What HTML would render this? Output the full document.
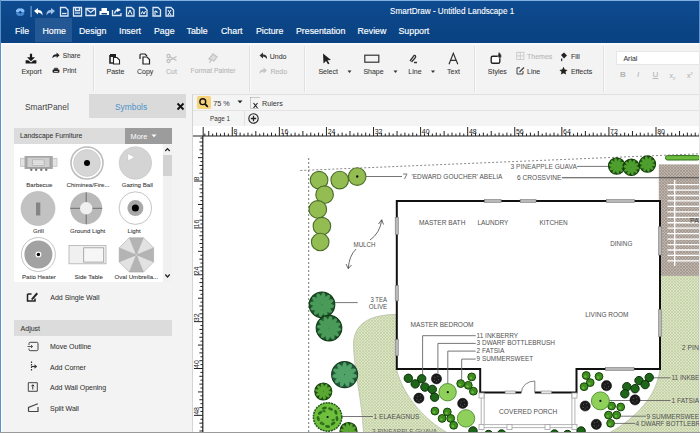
<!DOCTYPE html>
<html><head><meta charset="utf-8">
<style>
*{margin:0;padding:0;box-sizing:border-box}
html,body{width:700px;height:433px;overflow:hidden;background:#f3f3f3;font-family:"Liberation Sans",sans-serif}
.a{position:absolute;white-space:nowrap}
.t{position:absolute;white-space:nowrap;line-height:1}
#title{left:0;top:0;width:700px;height:43px;background:linear-gradient(#0e4b90,#0b4586 60%,#0a4283)}
.menu{color:#fff;font-size:8.8px;top:27px;-webkit-text-stroke:0.15px #fff}
.rb{color:#383838;font-size:7px;-webkit-text-stroke:0.07px #383838}
.dim{-webkit-text-stroke:0.1px #bbb}
.dim{color:#b5b5b5}
.sep{position:absolute;width:1px;background:#e0e0e0;box-shadow:1px 0 0 #fafafa}
.sym{color:#3a3a3a;font-size:6.1px;-webkit-text-stroke:0.08px #3a3a3a}
.pl{color:#333;font-size:7px;-webkit-text-stroke:0.06px #333}
</style></head><body>
<!-- outer border -->
<div class="a" style="left:0;top:0;width:700px;height:1px;background:#7fb0e0;z-index:5"></div>
<div class="a" style="left:0;top:0;width:1px;height:433px;background:#5b8fc7;z-index:5"></div>
<div class="a" style="left:1px;top:43px;width:1px;height:390px;background:#fff;z-index:5"></div>
<div class="a" style="left:699px;top:43px;width:1px;height:390px;background:#e8e8e8;z-index:5"></div>
<div class="a" style="left:699px;top:0;width:1px;height:43px;background:#5f94cc;z-index:5"></div>
<div class="a" style="left:1px;top:43px;width:698px;height:2px;background:#fafafa;z-index:4"></div>
<div class="a" style="left:0;top:432px;width:700px;height:1px;background:#9a9a9a;z-index:5"></div>

<!-- title bar -->
<div id="title" class="a"></div>
<div class="a" style="left:35px;top:18px;width:37px;height:24px;background:#235894"></div>
<div class="t" style="left:390px;top:7.6px;color:#fff;font-size:8.15px;-webkit-text-stroke:0.1px #fff">SmartDraw - Untitled Landscape 1</div>
<div class="t menu" style="left:15px">File</div>
<div class="t menu" style="left:42.5px">Home</div>
<div class="t menu" style="left:79px">Design</div>
<div class="t menu" style="left:119px">Insert</div>
<div class="t menu" style="left:154px">Page</div>
<div class="t menu" style="left:186.5px">Table</div>
<div class="t menu" style="left:221px">Chart</div>
<div class="t menu" style="left:256px">Picture</div>
<div class="t menu" style="left:296px">Presentation</div>
<div class="t menu" style="left:357.5px">Review</div>
<div class="t menu" style="left:398.5px">Support</div>

<!-- ribbon -->
<div class="a" style="left:0;top:43px;width:700px;height:48px;background:#f3f3f3"></div>


<!-- quick access icons -->
<svg class="a" style="left:0;top:0" width="180" height="20" viewBox="0 0 180 20">
 <g fill="#86c0fb"><ellipse cx="18.2" cy="10.3" rx="2.6" ry="1.7" transform="rotate(-35 18.2 10.3)"/><ellipse cx="22.2" cy="10.3" rx="2.6" ry="1.7" transform="rotate(35 22.2 10.3)"/></g>
 <g fill="#4b89cf"><ellipse cx="18.2" cy="14" rx="2.4" ry="1.6" transform="rotate(35 18.2 14)"/><ellipse cx="22.2" cy="14" rx="2.4" ry="1.6" transform="rotate(-35 22.2 14)"/></g>
 <rect x="30.5" y="6" width="1.2" height="11" fill="#6f9ed4"/>
 <path d="M34 11 L38 8 L38 10 Q43 10 42.5 15.5 Q41 12.5 38 12.5 L38 14.5Z" fill="#fff"/>
 <path d="M55 11 L51 8 L51 10 Q46 10 46.5 15.5 Q48 12.5 51 12.5 L51 14.5Z" fill="#9fc0e8"/>
 <g fill="none" stroke="#dce8f6" stroke-width="1.3">
  <path d="M60.5 7.5 H65.5 L68 10 V16 H60.5Z"/><path d="M62 13.5 H66.5"/>
  <path d="M73.5 7.5 H81.5 V16 H73.5Z"/><path d="M75.5 7.5 V10.5 H79.5 V7.5"/><path d="M75 13 H80"/>
  <path d="M86 8.5 H95.5 V15.5 H86Z"/><path d="M86 8.5 L90.7 12.5 L95.5 8.5"/>
  <path d="M112.5 10 V15.5 H121 V13"/><path d="M114.5 13.5 Q115.5 9.5 119.5 9.5"/>
  <path d="M126.5 7.5 H131.5 L134 10 V16 H126.5Z"/>
  <path d="M139.5 7.5 H144.5 L147 10 V16 H139.5Z"/>
  <path d="M153 7.5 H158 L160.5 10 V16 H153Z"/>
  <path d="M166 7.5 H171 L173.5 10 V16 H166Z"/>
 </g>
 <path d="M99.5 11 H109 V15 H99.5Z M101.5 8 H107 V11 H101.5Z" fill="#fff"/><rect x="101.5" y="13" width="5.5" height="1.5" fill="#0c4889"/>
 <path d="M117 8 L121 10 L117 12Z" fill="#fff"/>
 <path d="M128 14.5 L130 10 L132 14.5" stroke="#fff" stroke-width="1" fill="none"/>
 <path d="M141 14 L142.5 11.5 L144 14 L145.5 11" stroke="#fff" stroke-width="1" fill="none"/>
 <path d="M155 15 V11 Q158 11 157 13" stroke="#fff" stroke-width="1" fill="none"/>
 <path d="M168 15 L171 10 M168 10 L171 15" stroke="#fff" stroke-width="1" fill="none"/>
</svg>

<!-- ribbon separators -->
<div class="sep" style="left:93px;top:46px;height:45.5px"></div>
<div class="sep" style="left:249px;top:46px;height:45.5px"></div>
<div class="sep" style="left:304px;top:46px;height:45.5px"></div>
<div class="sep" style="left:474px;top:46px;height:45.5px"></div>
<div class="sep" style="left:603px;top:46px;height:45.5px"></div>


<svg class="a" style="left:0;top:43px" width="700" height="48" viewBox="0 43 700 48">
 <!-- export -->
 <path d="M29.9 53.8 H32.1 V57.3 H35 L31 61.2 L27 57.3 H29.9Z" fill="#1a1a1a"/>
 <path d="M25.6 60.2 H28.3 L31 62.6 L33.7 60.2 H36.4 V63.6 H25.6Z" fill="#1a1a1a"/>
 <!-- share -->
 <path d="M52.3 58.2 Q52.3 54.3 56.6 54.2 V52.6 L59.6 55.3 L56.6 58 V56.3 Q54 56.3 52.3 58.2Z" fill="#222"/>
 <!-- print -->
 <path d="M54.4 68.3 H57.6 V69.6 H54.4Z" fill="none" stroke="#222" stroke-width="1"/>
 <rect x="52.6" y="69.6" width="6.8" height="3.2" rx="0.8" fill="#222"/>
 <rect x="54.2" y="71" width="3.6" height="0.8" fill="#f3f3f3"/>
 <!-- paste -->
 <path d="M110 54 H116 V57 H110Z" fill="#222"/><path d="M110 55 V63 H113" fill="none" stroke="#222" stroke-width="1.6"/>
 <path d="M113.5 57.5 H117 L119.5 60 V64 H113.5Z" fill="#fff" stroke="#222" stroke-width="1.1"/>
 <!-- copy -->
 <path d="M140 59 V55 Q140 54 141 54 H145 L147 56" fill="none" stroke="#222" stroke-width="1.2"/>
 <path d="M143 57 H147 L149.5 59.5 V64 H143Z" fill="#fff" stroke="#222" stroke-width="1.2"/>
 <!-- cut -->
 <g stroke="#bbb" stroke-width="1.1" fill="none"><circle cx="168.5" cy="56" r="1.6"/><circle cx="168.5" cy="61" r="1.6"/><path d="M170 56.8 L176.5 60.5 M170 60.2 L176.5 56.5"/></g>
 <!-- format painter -->
 <path d="M209 59 L213 54 L217 57 L214 61 Z M211 60 L209.5 63" stroke="#c5c5c5" stroke-width="1.3" fill="#ddd"/>
 <!-- undo/redo -->
 <path d="M259.5 55.5 L263 52.5 V54.5 Q267.5 54.5 267 59 Q265.5 56.5 263 56.5 V58.5Z" fill="#333"/>
 <path d="M267 70.5 L263.5 67.5 V69.5 Q259 69.5 259.5 74 Q261 71.5 263.5 71.5 V73.5Z" fill="#c5c5c5"/>
 <!-- select -->
 <path d="M323 53.5 L331 60 L327.5 60.3 L329.5 63.5 L328 64.3 L326 61 L323.5 63.5Z" fill="#222"/>
 <path d="M347.5 70.5 H351.5 L349.5 73Z" fill="#333"/>
 <!-- shape -->
 <rect x="364.8" y="55.2" width="14" height="7" fill="none" stroke="#333" stroke-width="1.2"/>
 <path d="M393.5 70.5 H397.5 L395.5 73Z" fill="#333"/>
 <!-- line -->
 <path d="M410 61 L414 55.5 Q416 55 415.5 57.5 L411.5 62 M414 62.5 H417" stroke="#333" stroke-width="1.3" fill="none"/>
 <path d="M431 70.5 H435 L433 73Z" fill="#333"/>
 <!-- Text A -->
 <path d="M449 64.3 L453.3 53.3 L457.8 64.3 M450.8 60.3 H455.9" stroke="#333" stroke-width="1.2" fill="none"/>
 <!-- styles -->
 <rect x="491.2" y="56.2" width="8.6" height="7" rx="1.5" fill="#fff" stroke="#222" stroke-width="1.4"/>
 <path d="M498.8 51.8 Q502.2 55 501.4 57.2 Q500.2 58.8 498.3 57.6 Q497.2 56.2 498.8 51.8Z" fill="#222" stroke="#f3f3f3" stroke-width="0.5"/>
 <!-- themes / line small -->
 <g stroke="#c8c8c8" stroke-width="0.9" fill="none"><rect x="516.7" y="52.3" width="7.2" height="7.2"/><path d="M520.3 52.3 V59.5 M516.7 55.9 H523.9"/></g>
 <path d="M520 67.8 H517 V74 H523 V71" stroke="#444" stroke-width="1" fill="none"/><path d="M519.5 72 L524 67.5" stroke="#444" stroke-width="1.2"/>
 <!-- fill -->
 <path d="M561 55 L564 52.5 L567 55.5 L564 58.5Z" fill="#222"/><path d="M562 58.5 Q561 60 562 61" stroke="#222" stroke-width="1.2" fill="none"/>
 <!-- effects star -->
 <path d="M563.5 66.8 L564.8 69.6 L567.6 69.9 L565.5 71.8 L566.1 74.6 L563.5 73.2 L560.9 74.6 L561.5 71.8 L559.4 69.9 L562.2 69.6Z" fill="#222"/>
</svg>
<div class="t rb" style="left:21.4px;top:68px">Export</div>
<div class="t rb" style="left:62.8px;top:53px;font-size:6.6px">Share</div>
<div class="t rb" style="left:62.8px;top:68px;font-size:6.6px">Print</div>
<div class="t rb" style="left:106.5px;top:68px">Paste</div>
<div class="t rb" style="left:137px;top:68px">Copy</div>
<div class="t rb dim" style="left:166px;top:68px">Cut</div>
<div class="t rb dim" style="left:190.6px;top:68px;font-size:6.8px">Format Painter</div>
<div class="t rb" style="left:269.7px;top:53px">Undo</div>
<div class="t rb dim" style="left:270.4px;top:68px">Redo</div>
<div class="t rb" style="left:318.4px;top:68px">Select</div>
<div class="t rb" style="left:363.4px;top:68px">Shape</div>
<div class="t rb" style="left:408.3px;top:68px">Line</div>
<div class="t rb" style="left:447px;top:68px">Text</div>
<div class="t rb" style="left:487.8px;top:68px">Styles</div>
<div class="t rb dim" style="left:527px;top:53px">Themes</div>
<div class="t rb" style="left:527px;top:68px">Line</div>
<div class="t rb" style="left:570.9px;top:53px">Fill</div>
<div class="t rb" style="left:570.9px;top:68px">Effects</div>
<div class="a" style="left:616px;top:51px;width:84px;height:14px;background:#fff;border:1px solid #e6e6e6;border-right:none"></div>
<div class="t rb" style="left:623.4px;top:55px">Arial</div>
<div class="t dim" style="left:620px;top:71px;font-size:8px;font-weight:bold">B</div>
<div class="t dim" style="left:637px;top:71px;font-size:8px;font-style:italic">I</div>
<div class="t dim" style="left:652.5px;top:71px;font-size:8px;text-decoration:underline">U</div>
<div class="t dim" style="left:669.5px;top:72px;font-size:7px">x<sub style="font-size:4px">2</sub></div>
<div class="t dim" style="left:687px;top:72px;font-size:7px">x<sup style="font-size:4px">2</sup></div>

<!-- left panel -->

<div class="a" style="left:0;top:91px;width:192px;height:342px;background:#f3f3f3"></div>
<div class="a" style="left:89px;top:94px;width:97px;height:23.5px;background:#dadada"></div>
<div class="t" style="left:25px;top:102.5px;color:#444;font-size:8.4px">SmartPanel</div>
<div class="t" style="left:115px;top:102.5px;color:#4d93c9;font-size:8.4px">Symbols</div>
<svg class="a" style="left:176px;top:102px" width="9" height="9"><path d="M1.5 1.5 L7.5 7.5 M7.5 1.5 L1.5 7.5" stroke="#111" stroke-width="1.8"/></svg>
<div class="a" style="left:14px;top:128px;width:158px;height:15.5px;background:#dcdcdc"></div>
<div class="a" style="left:125px;top:128px;width:47px;height:15.5px;background:#9c9c9c"></div>
<div class="t" style="left:20px;top:133.1px;color:#333;font-size:6.8px;-webkit-text-stroke:0.05px #333">Landscape Furniture</div>
<div class="t" style="left:130.5px;top:132.6px;color:#fff;font-size:7.4px">More</div>
<svg class="a" style="left:150px;top:133px" width="8" height="6"><path d="M1.5 1.5 H6.5 L4 4.2Z" fill="#fff"/></svg>
<div class="a" style="left:14px;top:143.5px;width:158px;height:138px;background:#fff"></div>
<div class="a" style="left:163px;top:143.5px;width:9px;height:138px;background:#f1f1f1"></div>
<div class="a" style="left:163px;top:154.5px;width:9px;height:21.5px;background:#d2d2d2"></div>
<svg class="a" style="left:163px;top:145px" width="9" height="136">
 <path d="M2.3 6 L4.5 3.6 L6.7 6" stroke="#222" stroke-width="1.2" fill="none"/>
 <path d="M2.3 129.5 L4.5 132 L6.7 129.5" stroke="#222" stroke-width="1.2" fill="none"/>
</svg>
<svg class="a" style="left:14px;top:143.5px" width="149" height="138" viewBox="14 143.5 149 138">
 <!-- barbecue -->
 <rect x="20.5" y="157.8" width="36.5" height="8" fill="#dedede" stroke="#c4c4c4" stroke-width="0.8"/>
 <path d="M21 160 H56.5 M21 162 H56.5 M21 164 H56.5" stroke="#ececec" stroke-width="0.6"/>
 <rect x="24.5" y="155.5" width="28.3" height="13" fill="#a9a9a9"/>
 <rect x="27" y="156.6" width="23" height="10.4" fill="#cfcfcf" stroke="#9a9a9a" stroke-width="0.8"/>
 <rect x="32.7" y="159.4" width="11.4" height="5.6" fill="#e6e6e6" stroke="#a5a5a5" stroke-width="0.6"/>
 <path d="M33 161.3 H44 M33 163.1 H44" stroke="#c9c9c9" stroke-width="0.5"/>
 <g fill="#777"><circle cx="31.3" cy="169.2" r="1.2"/><circle cx="36.1" cy="169.2" r="1.2"/><circle cx="41.3" cy="169.2" r="1.2"/><circle cx="46.2" cy="169.2" r="1.2"/></g>
 <!-- chiminea -->
 <circle cx="87" cy="162.5" r="16" fill="#fff" stroke="#bdbdbd" stroke-width="1.6"/>
 <circle cx="87" cy="162.5" r="13.4" fill="#d6d6d6" stroke="#c4c4c4" stroke-width="0.6"/>
 <circle cx="87" cy="162.5" r="3" fill="#000"/>
 <!-- gazing ball -->
 <circle cx="135.4" cy="162.5" r="16.3" fill="#d4d4d4" stroke="#c4c4c4" stroke-width="0.6"/>
 <path d="M127.5 153 L134.8 156.5 L128 160.5Z" fill="#fff" stroke="#bbb" stroke-width="0.5"/>
 <!-- grill -->
 <circle cx="38" cy="208" r="17" fill="#c2c2c2" stroke="#b5b5b5" stroke-width="0.6"/>
 <rect x="36" y="202" width="4.3" height="13" fill="#858585"/>
 <!-- ground light -->
 <circle cx="86.2" cy="207.8" r="16" fill="#b9b9b9"/>
 <circle cx="86.2" cy="207.8" r="6.2" fill="#f0f0f0"/>
 <path d="M86.2 191.8 V201.6 M86.2 214 V223.8 M70.2 207.8 H80 M92.4 207.8 H102.2" stroke="#6f6f6f" stroke-width="1"/>
 <!-- light -->
 <circle cx="135.4" cy="207.6" r="16.3" fill="#fff" stroke="#b5b5b5" stroke-width="0.8"/>
 <circle cx="135.4" cy="207.6" r="8" fill="#a8a8a8"/>
 <circle cx="135.4" cy="207.6" r="3.5" fill="#000"/>
 <!-- patio heater -->
 <circle cx="38.4" cy="254" r="17" fill="#fff" stroke="#b5b5b5" stroke-width="0.8"/>
 <circle cx="38.4" cy="254" r="14" fill="#a2a2a2"/>
 <circle cx="38.4" cy="254" r="3" fill="#fff"/>
 <circle cx="38.4" cy="254" r="1.7" fill="#000"/>
 <!-- side table -->
 <rect x="69" y="245" width="37" height="18.3" fill="#f0f0f0" stroke="#b0b0b0" stroke-width="0.8"/>
 <rect x="83.7" y="247.3" width="20" height="14.3" fill="#f6f6f6" stroke="#999" stroke-width="0.8"/>
 <!-- umbrella -->
 <g transform="translate(136.4 254.4)">
  <path d="M0 0 L-7.1 -17.2 L7.1 -17.2Z M0 0 L17.2 -7.1 L17.2 7.1Z M0 0 L7.1 17.2 L-7.1 17.2Z M0 0 L-17.2 7.1 L-17.2 -7.1Z" fill="#b4b4b4"/>
  <path d="M0 0 L7.1 -17.2 L17.2 -7.1Z M0 0 L17.2 7.1 L7.1 17.2Z M0 0 L-7.1 17.2 L-17.2 7.1Z M0 0 L-17.2 -7.1 L-7.1 -17.2Z" fill="#e2e2e2"/>
  <path d="M-7.1 -17.2 L7.1 -17.2 L17.2 -7.1 L17.2 7.1 L7.1 17.2 L-7.1 17.2 L-17.2 7.1 L-17.2 -7.1Z M-7.1 -17.2 L7.1 17.2 M7.1 -17.2 L-7.1 17.2 M17.2 -7.1 L-17.2 7.1 M17.2 7.1 L-17.2 -7.1" fill="none" stroke="#a0a0a0" stroke-width="0.5"/><circle r="1.5" fill="#ccc" stroke="#999" stroke-width="0.4"/>
 </g>
</svg>
<div class="t sym" style="left:26.3px;top:182px">Barbecue</div>
<div class="t sym" style="left:66.5px;top:182px">Chiminea/Fire...</div>
<div class="t sym" style="left:121.7px;top:182px">Gazing Ball</div>
<div class="t sym" style="left:33px;top:228px">Grill</div>
<div class="t sym" style="left:70px;top:228px">Ground Light</div>
<div class="t sym" style="left:127.5px;top:228px">Light</div>
<div class="t sym" style="left:22px;top:273.5px">Patio Heater</div>
<div class="t sym" style="left:74.5px;top:273.5px">Side Table</div>
<div class="t sym" style="left:114.5px;top:273.5px">Oval Umbrella...</div>

<svg class="a" style="left:20px;top:285px" width="30" height="130" viewBox="20 285 30 130">
 <path d="M27.5 294 V301 H35 V298.5 M27.5 294 H31.5" stroke="#222" stroke-width="1.5" fill="none"/>
 <path d="M31 299 L36.5 292.5 L38 294 L32.5 300Z" fill="#222"/>
 <path d="M29 345 V343.5 Q29 342.3 30.2 342.3 H36.8 Q38 342.3 38 343.5 V349.5 Q38 350.7 36.8 350.7 H30.2 Q29 350.7 29 349.5 V348.5" stroke="#444" stroke-width="1" fill="none"/><path d="M27.5 346.5 H32.5 M31 345 L32.6 346.5 L31 348" stroke="#444" stroke-width="0.9" fill="none"/>
 <path d="M31.5 361.5 V371.5" stroke="#333" stroke-width="1.2" stroke-dasharray="1.4 1.1" fill="none"/><path d="M31.5 366.5 H35" stroke="#333" stroke-width="1.1"/><path d="M34.5 364.3 L37.2 366.5 L34.5 368.7Z" fill="#333"/>
 <path d="M28.3 382.7 H37.3 V391.3 H28.3Z" stroke="#444" stroke-width="1" fill="none"/><path d="M32.8 389.5 V385 M31.4 386.3 L32.8 384.7 L34.2 386.3" stroke="#333" stroke-width="1" fill="none"/>
 <path d="M28.5 411.5 V407.5 L37.8 403.8 M28.5 411.5 H38 V407" stroke="#444" stroke-width="1.2" fill="none"/>
</svg>
<div class="t pl" style="left:50.3px;top:293.5px">Add Single Wall</div>
<div class="a" style="left:14px;top:320.3px;width:158px;height:15.4px;background:#dcdcdc"></div>
<div class="t pl" style="left:20.6px;top:324.5px">Adjust</div>
<div class="t pl" style="left:50px;top:343px">Move Outline</div>
<div class="t pl" style="left:50px;top:363.8px">Add Corner</div>
<div class="t pl" style="left:50px;top:384.3px">Add Wall Opening</div>
<div class="t pl" style="left:50px;top:405px">Split Wall</div>



<!-- canvas -->
<div class="a" style="left:192px;top:94px;width:508px;height:339px;background:#f4f4f4;border-left:1px solid #d4d4d4;border-top:1px solid #e0e0e0"></div>
<div class="a" style="left:193px;top:110px;width:506px;height:1px;background:#e4e4e4"></div>
<div class="a" style="left:197.4px;top:96.2px;width:14px;height:13.3px;background:#f7d47c;border-radius:1.5px"></div>
<svg class="a" style="left:197px;top:95.5px" width="15" height="15"><circle cx="5.8" cy="5.7" r="2.9" stroke="#111" stroke-width="1.4" fill="none"/><path d="M7.9 7.9 L10.8 10.8" stroke="#111" stroke-width="1.8"/></svg>
<div class="t" style="left:213.3px;top:99.5px;color:#333;font-size:7.2px">75 %</div>
<svg class="a" style="left:236px;top:99px" width="8" height="6"><path d="M1.5 1.5 H6.5 L4 4.3Z" fill="#222"/></svg>
<svg class="a" style="left:249px;top:96px" width="12" height="14"><path d="M1.5 1.5 V12.5 H10.5 M1.5 1.5 H10.5" stroke="#888" stroke-width="0.8" fill="none" stroke-dasharray="1 1"/><path d="M4.5 7 L8.5 12 M8.5 7 L4.5 12" stroke="#222" stroke-width="1.1"/></svg>
<div class="t" style="left:262px;top:99.5px;color:#333;font-size:7.2px">Rulers</div>
<div class="t" style="left:210px;top:115.5px;color:#333;font-size:6.3px">Page 1</div>
<div class="a" style="left:244px;top:111px;width:1px;height:15px;background:#e2e2e2"></div>
<svg class="a" style="left:247px;top:112px" width="13" height="13"><circle cx="6.5" cy="6.5" r="4.7" stroke="#222" stroke-width="1.1" fill="none"/><path d="M6.5 3.8 V9.2 M3.8 6.5 H9.2" stroke="#222" stroke-width="1.3"/></svg>
<div class="a" style="left:193px;top:126px;width:506px;height:306px;background:#fff"></div>
<svg class="a" style="left:193px;top:126px" width="506" height="306" viewBox="193 126 506 306">
 <defs>
  <pattern id="lawn" width="3" height="3" patternUnits="userSpaceOnUse"><rect width="3" height="3" fill="#dce6c5"/><path d="M0 0 L3 3 M3 0 L0 3" stroke="#c0cda0" stroke-width="0.7"/></pattern>
  <pattern id="patio" width="3" height="3" patternUnits="userSpaceOnUse"><rect width="3" height="3" fill="#beb4ab"/><path d="M0 0 L3 3 M3 0 L0 3" stroke="#9d928a" stroke-width="0.7"/></pattern>
 </defs>
 <rect x="193" y="126" width="506" height="11" fill="#fff"/>
 <rect x="193" y="137" width="10" height="295" fill="#fff"/>
<!--DRAW-->
<path d="M396.5 314.5 C372 314.5 353.5 322 353.5 345 C354 370 362 400 363.5 432.5 L447 432.5 C425 420 403 396 396.5 369 Z" fill="url(#lawn)" stroke="#b9c2ab" stroke-width="0.8"/>
<path d="M660 275.5 H699 V432.5 H610 C636 418 657 396 660 369 Z" fill="url(#lawn)" stroke="#b9c2ab" stroke-width="0.8"/>
<rect x="658.8" y="164.4" width="40.2" height="111.4" fill="url(#patio)"/>
<path d="M667.5 184.60 H699 M667.5 190.05 H699 M667.5 195.50 H699 M667.5 200.95 H699 M667.5 206.40 H699 M667.5 211.85 H699 M667.5 217.30 H699 M667.5 222.75 H699 M667.5 228.20 H699 M667.5 233.65 H699 M667.5 239.10 H699 M667.5 244.55 H699 M667.5 250.00 H699 M667.5 255.45 H699 M667.5 260.90 H699 M674.7 180 V266" stroke="#fff" stroke-width="1.3"/>
<text x="690" y="223" font-size="6.6" fill="#444" textLength="20" lengthAdjust="spacingAndGlyphs">PATIO</text>
<rect x="665.5" y="155.6" width="34" height="4.4" rx="2" fill="#6cbd3e" stroke="#2f6e1a" stroke-width="1"/>
<path d="M300.3 170.5 L699 153.8" stroke="#6a6a6a" stroke-width="0.8" stroke-dasharray="2 2" fill="none"/>
<path d="M308.7 158 V432" stroke="#666" stroke-width="0.9" stroke-dasharray="2 2" fill="none"/>
<path d="M396.8 201 H660 V369 H576.5 V392.4 H480.2 V369 H396.8 Z" fill="#fff" stroke="#111" stroke-width="2"/>
<rect x="484.6" y="199.4" width="16.5" height="3.2" fill="#b9b9b9" stroke="#808080" stroke-width="0.6"/>
<rect x="520.2" y="199.4" width="15.8" height="3.2" fill="#b9b9b9" stroke="#808080" stroke-width="0.6"/>
<rect x="606.3" y="199.4" width="28.2" height="3.2" fill="#b9b9b9" stroke="#808080" stroke-width="0.6"/>
<rect x="395.2" y="217.3" width="3.2" height="17.1" fill="#b9b9b9" stroke="#808080" stroke-width="0.6"/>
<rect x="395.2" y="285.4" width="3.2" height="15.5" fill="#b9b9b9" stroke="#808080" stroke-width="0.6"/>
<rect x="395.2" y="339.4" width="3.2" height="16.3" fill="#b9b9b9" stroke="#808080" stroke-width="0.6"/>
<rect x="658.4" y="226.8" width="3.2" height="28.2" fill="#b9b9b9" stroke="#808080" stroke-width="0.6"/>
<rect x="658.4" y="309.7" width="3.2" height="26.8" fill="#b9b9b9" stroke="#808080" stroke-width="0.6"/>
<rect x="605.5" y="367.4" width="28.5" height="3.2" fill="#b9b9b9" stroke="#808080" stroke-width="0.6"/>
<rect x="505.1" y="391.0" width="10.3" height="2.8" fill="#e6e6e6" stroke="#8a8a8a" stroke-width="0.6"/>
<rect x="541.1" y="391.0" width="10.3" height="2.8" fill="#e6e6e6" stroke="#8a8a8a" stroke-width="0.6"/>
<rect x="521.4" y="390.5" width="13.4" height="4" fill="#fff"/>
<path d="M521.4 392.4 A13.4 11.4 0 0 1 534.8 381 V392.4" stroke="#666" stroke-width="0.8" fill="none"/>
<path d="M481.2 393.4 V427.6 H574.9 V393.4 M484.2 393.4 V424.6 H571.9 V393.4" stroke="#a0a0a0" stroke-width="0.8" fill="none"/>
<rect x="479.0" y="393.0" width="5" height="5" fill="#fff" stroke="#a0a0a0" stroke-width="0.8"/>
<rect x="572.0" y="393.0" width="5" height="5" fill="#fff" stroke="#a0a0a0" stroke-width="0.8"/>
<rect x="479.0" y="424.5" width="5" height="5" fill="#fff" stroke="#a0a0a0" stroke-width="0.8"/>
<rect x="507.0" y="424.5" width="5" height="5" fill="#fff" stroke="#a0a0a0" stroke-width="0.8"/>
<rect x="545.0" y="424.5" width="5" height="5" fill="#fff" stroke="#a0a0a0" stroke-width="0.8"/>
<rect x="572.0" y="424.5" width="5" height="5" fill="#fff" stroke="#a0a0a0" stroke-width="0.8"/>
<text x="419.1" y="224.8" font-size="6.6" fill="#505050" textLength="46.3" lengthAdjust="spacingAndGlyphs">MASTER BATH</text>
<text x="477.4" y="224.8" font-size="6.6" fill="#505050" textLength="30.9" lengthAdjust="spacingAndGlyphs">LAUNDRY</text>
<text x="539.4" y="224.8" font-size="6.6" fill="#505050" textLength="28.3" lengthAdjust="spacingAndGlyphs">KITCHEN</text>
<text x="610.2" y="245.8" font-size="6.6" fill="#505050" textLength="22.1" lengthAdjust="spacingAndGlyphs">DINING</text>
<text x="585.2" y="316.7" font-size="6.6" fill="#505050" textLength="43.3" lengthAdjust="spacingAndGlyphs">LIVING ROOM</text>
<text x="410.6" y="326.7" font-size="6.6" fill="#505050" textLength="62.9" lengthAdjust="spacingAndGlyphs">MASTER BEDROOM</text>
<text x="499.1" y="413.7" font-size="6.6" fill="#505050" textLength="58.3" lengthAdjust="spacingAndGlyphs">COVERED PORCH</text>
<text x="353.5" y="247.4" font-size="6.6" fill="#505050" textLength="22" lengthAdjust="spacingAndGlyphs">MULCH</text>
<path d="M370 240 Q380 233 381.7 220 M378.5 224 L381.7 219.7 L383.5 224.5 M356 249 Q349 256 348.3 268.6 M346 264 L348.3 268.6 L351.5 265" stroke="#444" stroke-width="0.8" fill="none"/>
<path d="M357.2 176.5 H402 M577 166.4 H609 M334.6 302.6 H357.7 M422.6 375 V335.7 H475.7 M437.9 373 V343.4 H475.7 M447.8 392.2 V351.1 H475.7 M461.7 380 V359.1 H475.7 M341 416.5 H372.9 M653 377.8 H670.5 M607 400.5 H670.5 M620 416.2 H646 M613 423.4 H635" stroke="#666" stroke-width="0.9" fill="none"/>
<path d="M562 177.7 H699" stroke="#4a4a4a" stroke-width="1.1" fill="none"/>
<path d="M403 174 H407 L404.5 179" stroke="#444" stroke-width="0.7" fill="none"/>
<text x="411.5" y="178.9" font-size="6.6" fill="#505050" textLength="90.8" lengthAdjust="spacingAndGlyphs">'EDWARD GOUCHER' ABELIA</text>
<text x="510.6" y="168.7" font-size="6.6" fill="#5a5a5a" textLength="66.2" lengthAdjust="spacingAndGlyphs">3 PINEAPPLE GUAVA</text>
<text x="517" y="179.9" font-size="6.6" fill="#505050" textLength="44.4" lengthAdjust="spacingAndGlyphs">6 CROSSVINE</text>
<text x="370.5" y="301.8" font-size="6.6" fill="#505050" textLength="16.5" lengthAdjust="spacingAndGlyphs">3 TEA</text>
<text x="368.8" y="308.6" font-size="6.6" fill="#505050" textLength="18.5" lengthAdjust="spacingAndGlyphs">OLIVE</text>
<text x="476.6" y="337.8" font-size="6.6" fill="#505050" textLength="41.5" lengthAdjust="spacingAndGlyphs">11 INKBERRY</text>
<text x="476.6" y="345.4" font-size="6.6" fill="#505050" textLength="78.3" lengthAdjust="spacingAndGlyphs">3 DWARF BOTTLEBRUSH</text>
<text x="476.6" y="353.3" font-size="6.6" fill="#505050" textLength="27.7" lengthAdjust="spacingAndGlyphs">2 FATSIA</text>
<text x="476.6" y="361.3" font-size="6.6" fill="#505050" textLength="56.5" lengthAdjust="spacingAndGlyphs">9 SUMMERSWEET</text>
<text x="373.6" y="419.1" font-size="6.6" fill="#505050" textLength="45.7" lengthAdjust="spacingAndGlyphs">1 ELAEAGNUS</text>
<text x="372" y="433.6" font-size="6.6" fill="#666" textLength="65" lengthAdjust="spacingAndGlyphs">3 PINEAPPLE GUAVA</text>
<text x="681.7" y="350.3" font-size="6.6" fill="#505050" textLength="44" lengthAdjust="spacingAndGlyphs">2 PINEAPPLE</text>
<text x="671.5" y="380.2" font-size="6.6" fill="#505050" textLength="41.5" lengthAdjust="spacingAndGlyphs">11 INKBERRY</text>
<text x="671.5" y="402.7" font-size="6.6" fill="#505050" textLength="27.7" lengthAdjust="spacingAndGlyphs">1 FATSIA</text>
<text x="646.5" y="418.5" font-size="6.6" fill="#505050" textLength="56.5" lengthAdjust="spacingAndGlyphs">9 SUMMERSWEET</text>
<text x="635.5" y="425.7" font-size="6.6" fill="#505050" textLength="78.3" lengthAdjust="spacingAndGlyphs">4 DWARF BOTTLEBRUSH</text>
<circle cx="319.1" cy="180.2" r="8.8" fill="#93bc53" stroke="#4a6d28" stroke-width="1.1"/>
<circle cx="339.7" cy="180.1" r="8.8" fill="#93bc53" stroke="#4a6d28" stroke-width="1.1"/>
<circle cx="357.2" cy="176.6" r="8.8" fill="#93bc53" stroke="#4a6d28" stroke-width="1.1"/>
<circle cx="324.6" cy="194.7" r="8.8" fill="#93bc53" stroke="#4a6d28" stroke-width="1.1"/>
<circle cx="317.8" cy="209.4" r="8.8" fill="#93bc53" stroke="#4a6d28" stroke-width="1.1"/>
<circle cx="321.9" cy="226.2" r="8.8" fill="#93bc53" stroke="#4a6d28" stroke-width="1.1"/>
<circle cx="320.2" cy="242" r="8.8" fill="#93bc53" stroke="#4a6d28" stroke-width="1.1"/>
<circle cx="357.2" cy="176.5" r="1.2" fill="#111"/>
<circle cx="322" cy="304.8" r="12.8" fill="#1d5428" stroke="#123a18" stroke-width="1.1"/>
<g fill="#4a9a5a"><ellipse cx="328.34" cy="305.69" rx="5.89" ry="2.43" transform="rotate(8.0 328.34 305.69)"/><ellipse cx="327.04" cy="308.74" rx="5.89" ry="2.43" transform="rotate(38.0 327.04 308.74)"/><ellipse cx="324.40" cy="310.73" rx="5.89" ry="2.43" transform="rotate(68.0 324.40 310.73)"/><ellipse cx="321.11" cy="311.14" rx="5.89" ry="2.43" transform="rotate(98.0 321.11 311.14)"/><ellipse cx="318.06" cy="309.84" rx="5.89" ry="2.43" transform="rotate(128.0 318.06 309.84)"/><ellipse cx="316.07" cy="307.20" rx="5.89" ry="2.43" transform="rotate(158.0 316.07 307.20)"/><ellipse cx="315.66" cy="303.91" rx="5.89" ry="2.43" transform="rotate(188.0 315.66 303.91)"/><ellipse cx="316.96" cy="300.86" rx="5.89" ry="2.43" transform="rotate(218.0 316.96 300.86)"/><ellipse cx="319.60" cy="298.87" rx="5.89" ry="2.43" transform="rotate(248.0 319.60 298.87)"/><ellipse cx="322.89" cy="298.46" rx="5.89" ry="2.43" transform="rotate(278.0 322.89 298.46)"/><ellipse cx="325.94" cy="299.76" rx="5.89" ry="2.43" transform="rotate(308.0 325.94 299.76)"/><ellipse cx="327.93" cy="302.40" rx="5.89" ry="2.43" transform="rotate(338.0 327.93 302.40)"/></g>
<circle cx="329" cy="328.1" r="12.8" fill="#1d5428" stroke="#123a18" stroke-width="1.1"/>
<g fill="#4a9a5a"><ellipse cx="335.34" cy="328.99" rx="5.89" ry="2.43" transform="rotate(8.0 335.34 328.99)"/><ellipse cx="334.04" cy="332.04" rx="5.89" ry="2.43" transform="rotate(38.0 334.04 332.04)"/><ellipse cx="331.40" cy="334.03" rx="5.89" ry="2.43" transform="rotate(68.0 331.40 334.03)"/><ellipse cx="328.11" cy="334.44" rx="5.89" ry="2.43" transform="rotate(98.0 328.11 334.44)"/><ellipse cx="325.06" cy="333.14" rx="5.89" ry="2.43" transform="rotate(128.0 325.06 333.14)"/><ellipse cx="323.07" cy="330.50" rx="5.89" ry="2.43" transform="rotate(158.0 323.07 330.50)"/><ellipse cx="322.66" cy="327.21" rx="5.89" ry="2.43" transform="rotate(188.0 322.66 327.21)"/><ellipse cx="323.96" cy="324.16" rx="5.89" ry="2.43" transform="rotate(218.0 323.96 324.16)"/><ellipse cx="326.60" cy="322.17" rx="5.89" ry="2.43" transform="rotate(248.0 326.60 322.17)"/><ellipse cx="329.89" cy="321.76" rx="5.89" ry="2.43" transform="rotate(278.0 329.89 321.76)"/><ellipse cx="332.94" cy="323.06" rx="5.89" ry="2.43" transform="rotate(308.0 332.94 323.06)"/><ellipse cx="334.93" cy="325.70" rx="5.89" ry="2.43" transform="rotate(338.0 334.93 325.70)"/></g>
<circle cx="344.6" cy="374.6" r="13" fill="#22583a" stroke="#173f22" stroke-width="1.1"/>
<g fill="#52a36a"><ellipse cx="351.04" cy="375.50" rx="5.98" ry="2.47" transform="rotate(8.0 351.04 375.50)"/><ellipse cx="349.53" cy="378.84" rx="5.98" ry="2.47" transform="rotate(40.7 349.53 378.84)"/><ellipse cx="346.45" cy="380.83" rx="5.98" ry="2.47" transform="rotate(73.5 346.45 380.83)"/><ellipse cx="342.79" cy="380.84" rx="5.98" ry="2.47" transform="rotate(106.2 342.79 380.84)"/><ellipse cx="339.70" cy="378.87" rx="5.98" ry="2.47" transform="rotate(138.9 339.70 378.87)"/><ellipse cx="338.17" cy="375.55" rx="5.98" ry="2.47" transform="rotate(171.6 338.17 375.55)"/><ellipse cx="338.68" cy="371.92" rx="5.98" ry="2.47" transform="rotate(204.4 338.68 371.92)"/><ellipse cx="341.07" cy="369.14" rx="5.98" ry="2.47" transform="rotate(237.1 341.07 369.14)"/><ellipse cx="344.58" cy="368.10" rx="5.98" ry="2.47" transform="rotate(269.8 344.58 368.10)"/><ellipse cx="348.10" cy="369.12" rx="5.98" ry="2.47" transform="rotate(302.5 348.10 369.12)"/><ellipse cx="350.50" cy="371.88" rx="5.98" ry="2.47" transform="rotate(335.3 350.50 371.88)"/></g>
<circle cx="323.3" cy="391.5" r="8.5" fill="#1f5212" stroke="#17400c" stroke-width="1.1"/>
<g fill="#5aa832"><ellipse cx="327.51" cy="392.09" rx="3.91" ry="1.61" transform="rotate(8.0 327.51 392.09)"/><ellipse cx="326.36" cy="394.45" rx="3.91" ry="1.61" transform="rotate(44.0 326.36 394.45)"/><ellipse cx="324.04" cy="395.69" rx="3.91" ry="1.61" transform="rotate(80.0 324.04 395.69)"/><ellipse cx="321.44" cy="395.32" rx="3.91" ry="1.61" transform="rotate(116.0 321.44 395.32)"/><ellipse cx="319.55" cy="393.50" rx="3.91" ry="1.61" transform="rotate(152.0 319.55 393.50)"/><ellipse cx="319.09" cy="390.91" rx="3.91" ry="1.61" transform="rotate(188.0 319.09 390.91)"/><ellipse cx="320.24" cy="388.55" rx="3.91" ry="1.61" transform="rotate(224.0 320.24 388.55)"/><ellipse cx="322.56" cy="387.31" rx="3.91" ry="1.61" transform="rotate(260.0 322.56 387.31)"/><ellipse cx="325.16" cy="387.68" rx="3.91" ry="1.61" transform="rotate(296.0 325.16 387.68)"/><ellipse cx="327.05" cy="389.50" rx="3.91" ry="1.61" transform="rotate(332.0 327.05 389.50)"/></g>
<circle cx="348.5" cy="431" r="8.5" fill="#1f5212" stroke="#17400c" stroke-width="1.1"/>
<g fill="#5aa832"><ellipse cx="352.71" cy="431.59" rx="3.91" ry="1.61" transform="rotate(8.0 352.71 431.59)"/><ellipse cx="351.56" cy="433.95" rx="3.91" ry="1.61" transform="rotate(44.0 351.56 433.95)"/><ellipse cx="349.24" cy="435.19" rx="3.91" ry="1.61" transform="rotate(80.0 349.24 435.19)"/><ellipse cx="346.64" cy="434.82" rx="3.91" ry="1.61" transform="rotate(116.0 346.64 434.82)"/><ellipse cx="344.75" cy="433.00" rx="3.91" ry="1.61" transform="rotate(152.0 344.75 433.00)"/><ellipse cx="344.29" cy="430.41" rx="3.91" ry="1.61" transform="rotate(188.0 344.29 430.41)"/><ellipse cx="345.44" cy="428.05" rx="3.91" ry="1.61" transform="rotate(224.0 345.44 428.05)"/><ellipse cx="347.76" cy="426.81" rx="3.91" ry="1.61" transform="rotate(260.0 347.76 426.81)"/><ellipse cx="350.36" cy="427.18" rx="3.91" ry="1.61" transform="rotate(296.0 350.36 427.18)"/><ellipse cx="352.25" cy="429.00" rx="3.91" ry="1.61" transform="rotate(332.0 352.25 429.00)"/></g>
<circle cx="616.7" cy="166" r="8.2" fill="#1d5511" stroke="#143c0b" stroke-width="1.1"/>
<g fill="#4f9f2f"><ellipse cx="620.76" cy="166.57" rx="3.77" ry="1.56" transform="rotate(8.0 620.76 166.57)"/><ellipse cx="619.65" cy="168.85" rx="3.77" ry="1.56" transform="rotate(44.0 619.65 168.85)"/><ellipse cx="617.41" cy="170.04" rx="3.77" ry="1.56" transform="rotate(80.0 617.41 170.04)"/><ellipse cx="614.90" cy="169.69" rx="3.77" ry="1.56" transform="rotate(116.0 614.90 169.69)"/><ellipse cx="613.08" cy="167.92" rx="3.77" ry="1.56" transform="rotate(152.0 613.08 167.92)"/><ellipse cx="612.64" cy="165.43" rx="3.77" ry="1.56" transform="rotate(188.0 612.64 165.43)"/><ellipse cx="613.75" cy="163.15" rx="3.77" ry="1.56" transform="rotate(224.0 613.75 163.15)"/><ellipse cx="615.99" cy="161.96" rx="3.77" ry="1.56" transform="rotate(260.0 615.99 161.96)"/><ellipse cx="618.50" cy="162.31" rx="3.77" ry="1.56" transform="rotate(296.0 618.50 162.31)"/><ellipse cx="620.32" cy="164.08" rx="3.77" ry="1.56" transform="rotate(332.0 620.32 164.08)"/></g>
<circle cx="631.3" cy="167.3" r="8.2" fill="#1d5511" stroke="#143c0b" stroke-width="1.1"/>
<g fill="#4f9f2f"><ellipse cx="635.36" cy="167.87" rx="3.77" ry="1.56" transform="rotate(8.0 635.36 167.87)"/><ellipse cx="634.25" cy="170.15" rx="3.77" ry="1.56" transform="rotate(44.0 634.25 170.15)"/><ellipse cx="632.01" cy="171.34" rx="3.77" ry="1.56" transform="rotate(80.0 632.01 171.34)"/><ellipse cx="629.50" cy="170.99" rx="3.77" ry="1.56" transform="rotate(116.0 629.50 170.99)"/><ellipse cx="627.68" cy="169.22" rx="3.77" ry="1.56" transform="rotate(152.0 627.68 169.22)"/><ellipse cx="627.24" cy="166.73" rx="3.77" ry="1.56" transform="rotate(188.0 627.24 166.73)"/><ellipse cx="628.35" cy="164.45" rx="3.77" ry="1.56" transform="rotate(224.0 628.35 164.45)"/><ellipse cx="630.59" cy="163.26" rx="3.77" ry="1.56" transform="rotate(260.0 630.59 163.26)"/><ellipse cx="633.10" cy="163.61" rx="3.77" ry="1.56" transform="rotate(296.0 633.10 163.61)"/><ellipse cx="634.92" cy="165.38" rx="3.77" ry="1.56" transform="rotate(332.0 634.92 165.38)"/></g>
<circle cx="647.4" cy="164.1" r="8.2" fill="#1d5511" stroke="#143c0b" stroke-width="1.1"/>
<g fill="#4f9f2f"><ellipse cx="651.46" cy="164.67" rx="3.77" ry="1.56" transform="rotate(8.0 651.46 164.67)"/><ellipse cx="650.35" cy="166.95" rx="3.77" ry="1.56" transform="rotate(44.0 650.35 166.95)"/><ellipse cx="648.11" cy="168.14" rx="3.77" ry="1.56" transform="rotate(80.0 648.11 168.14)"/><ellipse cx="645.60" cy="167.79" rx="3.77" ry="1.56" transform="rotate(116.0 645.60 167.79)"/><ellipse cx="643.78" cy="166.02" rx="3.77" ry="1.56" transform="rotate(152.0 643.78 166.02)"/><ellipse cx="643.34" cy="163.53" rx="3.77" ry="1.56" transform="rotate(188.0 643.34 163.53)"/><ellipse cx="644.45" cy="161.25" rx="3.77" ry="1.56" transform="rotate(224.0 644.45 161.25)"/><ellipse cx="646.69" cy="160.06" rx="3.77" ry="1.56" transform="rotate(260.0 646.69 160.06)"/><ellipse cx="649.20" cy="160.41" rx="3.77" ry="1.56" transform="rotate(296.0 649.20 160.41)"/><ellipse cx="651.02" cy="162.18" rx="3.77" ry="1.56" transform="rotate(332.0 651.02 162.18)"/></g>
<circle cx="327.6" cy="417" r="14.2" fill="#6dbf3c" stroke="#25551a" stroke-width="1.5" stroke-dasharray="2 0.8"/>
<ellipse cx="336.96" cy="418.65" rx="2.6" ry="1.4" fill="#2d6a1c" transform="rotate(85 336.96 418.65)"/>
<ellipse cx="333.06" cy="423.51" rx="2.6" ry="1.4" fill="#2d6a1c" transform="rotate(147 333.06 423.51)"/>
<ellipse cx="327.60" cy="426.50" rx="2.6" ry="1.4" fill="#2d6a1c" transform="rotate(184 327.60 426.50)"/>
<ellipse cx="322.14" cy="423.51" rx="2.6" ry="1.4" fill="#2d6a1c" transform="rotate(198 322.14 423.51)"/>
<ellipse cx="318.24" cy="418.65" rx="2.6" ry="1.4" fill="#2d6a1c" transform="rotate(253 318.24 418.65)"/>
<ellipse cx="320.24" cy="412.75" rx="2.6" ry="1.4" fill="#2d6a1c" transform="rotate(328 320.24 412.75)"/>
<ellipse cx="324.35" cy="408.07" rx="2.6" ry="1.4" fill="#2d6a1c" transform="rotate(348 324.35 408.07)"/>
<ellipse cx="330.51" cy="409.01" rx="2.6" ry="1.4" fill="#2d6a1c" transform="rotate(380 330.51 409.01)"/>
<ellipse cx="335.83" cy="412.25" rx="2.6" ry="1.4" fill="#2d6a1c" transform="rotate(430 335.83 412.25)"/>
<ellipse cx="324" cy="411" rx="1.8" ry="1.1" fill="#357a22" transform="rotate(30 324 411)"/>
<ellipse cx="333" cy="420" rx="1.8" ry="1.1" fill="#357a22" transform="rotate(-20 333 420)"/>
<ellipse cx="322" cy="423" rx="1.8" ry="1.1" fill="#357a22" transform="rotate(60 322 423)"/>
<circle cx="327.6" cy="417" r="1.1" fill="#111"/>
<circle cx="408.3" cy="378.3" r="4.2" fill="#1d6519" stroke="#0b300a" stroke-width="1"/>
<circle cx="415.2" cy="383.9" r="4.2" fill="#1d6519" stroke="#0b300a" stroke-width="1"/>
<circle cx="421.7" cy="378.8" r="4.2" fill="#1d6519" stroke="#0b300a" stroke-width="1"/>
<circle cx="424.9" cy="387.1" r="4.2" fill="#1d6519" stroke="#0b300a" stroke-width="1"/>
<circle cx="432.3" cy="389.4" r="4.2" fill="#1d6519" stroke="#0b300a" stroke-width="1"/>
<circle cx="434.6" cy="397.2" r="4.2" fill="#1d6519" stroke="#0b300a" stroke-width="1"/>
<circle cx="473" cy="431" r="4.2" fill="#1d6519" stroke="#0b300a" stroke-width="1"/>
<circle cx="488.6" cy="434.5" r="4.2" fill="#1d6519" stroke="#0b300a" stroke-width="1"/>
<circle cx="501.6" cy="434" r="4.2" fill="#1d6519" stroke="#0b300a" stroke-width="1"/>
<circle cx="554.5" cy="434" r="4.2" fill="#1d6519" stroke="#0b300a" stroke-width="1"/>
<circle cx="567.5" cy="434.5" r="4.2" fill="#1d6519" stroke="#0b300a" stroke-width="1"/>
<circle cx="436.5" cy="378.8" r="5.1" fill="#1b1b1b" stroke="#000" stroke-width="0.5"/>
<path d="M434.5 377.3 h0.9 M437.5 376.3 h0.9 M438.0 379.8 h0.9 M434.0 380.3 h0.9 M436.0 381.8 h0.9" stroke="#777" stroke-width="0.8"/>
<circle cx="418.9" cy="398.2" r="5.1" fill="#1b1b1b" stroke="#000" stroke-width="0.5"/>
<path d="M416.9 396.7 h0.9 M419.9 395.7 h0.9 M420.4 399.2 h0.9 M416.4 399.7 h0.9 M418.4 401.2 h0.9" stroke="#777" stroke-width="0.8"/>
<circle cx="462.7" cy="403.4" r="5.1" fill="#1b1b1b" stroke="#000" stroke-width="0.5"/>
<path d="M460.7 401.9 h0.9 M463.7 400.9 h0.9 M464.2 404.4 h0.9 M460.2 404.9 h0.9 M462.2 406.4 h0.9" stroke="#777" stroke-width="0.8"/>
<circle cx="447.6" cy="392.2" r="8.7" fill="#8ed05a" stroke="#4c8a2c" stroke-width="0.9"/>
<circle cx="447.8" cy="392.2" r="1.1" fill="#111"/>
<circle cx="466" cy="418.4" r="8.7" fill="#8ed05a" stroke="#4c8a2c" stroke-width="0.9"/>
<circle cx="460.7" cy="383.6" r="3.9" fill="#3f8f1f" stroke="#17440c" stroke-width="1"/>
<circle cx="459.9" cy="384.6" r="1.2" fill="#6ab83e"/>
<circle cx="471.7" cy="376.9" r="3.9" fill="#3f8f1f" stroke="#17440c" stroke-width="1"/>
<circle cx="470.9" cy="377.9" r="1.2" fill="#6ab83e"/>
<circle cx="468.3" cy="385.3" r="3.9" fill="#3f8f1f" stroke="#17440c" stroke-width="1"/>
<circle cx="467.5" cy="386.3" r="1.2" fill="#6ab83e"/>
<circle cx="473.4" cy="391.2" r="3.9" fill="#3f8f1f" stroke="#17440c" stroke-width="1"/>
<circle cx="472.59999999999997" cy="392.2" r="1.2" fill="#6ab83e"/>
<circle cx="434.9" cy="411.1" r="3.9" fill="#3f8f1f" stroke="#17440c" stroke-width="1"/>
<circle cx="434.09999999999997" cy="412.1" r="1.2" fill="#6ab83e"/>
<circle cx="447.3" cy="412" r="3.9" fill="#3f8f1f" stroke="#17440c" stroke-width="1"/>
<circle cx="446.5" cy="413" r="1.2" fill="#6ab83e"/>
<circle cx="442.1" cy="418.4" r="3.9" fill="#3f8f1f" stroke="#17440c" stroke-width="1"/>
<circle cx="441.3" cy="419.4" r="1.2" fill="#6ab83e"/>
<circle cx="450.7" cy="418.4" r="3.9" fill="#3f8f1f" stroke="#17440c" stroke-width="1"/>
<circle cx="449.9" cy="419.4" r="1.2" fill="#6ab83e"/>
<circle cx="453.7" cy="425.3" r="3.9" fill="#3f8f1f" stroke="#17440c" stroke-width="1"/>
<circle cx="452.9" cy="426.3" r="1.2" fill="#6ab83e"/>
<circle cx="586.2" cy="375.5" r="3.9" fill="#3f8f1f" stroke="#17440c" stroke-width="1"/>
<circle cx="585.4000000000001" cy="376.5" r="1.2" fill="#6ab83e"/>
<circle cx="599" cy="376.5" r="3.9" fill="#3f8f1f" stroke="#17440c" stroke-width="1"/>
<circle cx="598.2" cy="377.5" r="1.2" fill="#6ab83e"/>
<circle cx="590.2" cy="382.6" r="3.9" fill="#3f8f1f" stroke="#17440c" stroke-width="1"/>
<circle cx="589.4000000000001" cy="383.6" r="1.2" fill="#6ab83e"/>
<circle cx="584.1" cy="386.7" r="3.9" fill="#3f8f1f" stroke="#17440c" stroke-width="1"/>
<circle cx="583.3000000000001" cy="387.7" r="1.2" fill="#6ab83e"/>
<circle cx="611.6" cy="406" r="3.9" fill="#3f8f1f" stroke="#17440c" stroke-width="1"/>
<circle cx="610.8000000000001" cy="407" r="1.2" fill="#6ab83e"/>
<circle cx="620.7" cy="407" r="3.9" fill="#3f8f1f" stroke="#17440c" stroke-width="1"/>
<circle cx="619.9000000000001" cy="408" r="1.2" fill="#6ab83e"/>
<circle cx="608.5" cy="415.1" r="3.9" fill="#3f8f1f" stroke="#17440c" stroke-width="1"/>
<circle cx="607.7" cy="416.1" r="1.2" fill="#6ab83e"/>
<circle cx="616.7" cy="415.1" r="3.9" fill="#3f8f1f" stroke="#17440c" stroke-width="1"/>
<circle cx="615.9000000000001" cy="416.1" r="1.2" fill="#6ab83e"/>
<circle cx="610.6" cy="423.3" r="3.9" fill="#3f8f1f" stroke="#17440c" stroke-width="1"/>
<circle cx="609.8000000000001" cy="424.3" r="1.2" fill="#6ab83e"/>
<circle cx="649.2" cy="377.5" r="4.2" fill="#1d6519" stroke="#0b300a" stroke-width="1"/>
<circle cx="639" cy="380.6" r="4.2" fill="#1d6519" stroke="#0b300a" stroke-width="1"/>
<circle cx="645.1" cy="384.6" r="4.2" fill="#1d6519" stroke="#0b300a" stroke-width="1"/>
<circle cx="626.8" cy="386.7" r="4.2" fill="#1d6519" stroke="#0b300a" stroke-width="1"/>
<circle cx="635" cy="388.7" r="4.2" fill="#1d6519" stroke="#0b300a" stroke-width="1"/>
<circle cx="624.8" cy="393.8" r="4.2" fill="#1d6519" stroke="#0b300a" stroke-width="1"/>
<circle cx="581.1" cy="431" r="4.2" fill="#1d6519" stroke="#0b300a" stroke-width="1"/>
<circle cx="606.5" cy="385.7" r="5.1" fill="#1b1b1b" stroke="#000" stroke-width="0.5"/>
<path d="M604.5 384.2 h0.9 M607.5 383.2 h0.9 M608.0 386.7 h0.9 M604.0 387.2 h0.9 M606.0 388.7 h0.9" stroke="#777" stroke-width="0.8"/>
<circle cx="635" cy="399.9" r="5.1" fill="#1b1b1b" stroke="#000" stroke-width="0.5"/>
<path d="M633 398.4 h0.9 M636 397.4 h0.9 M636.5 400.9 h0.9 M632.5 401.4 h0.9 M634.5 402.9 h0.9" stroke="#777" stroke-width="0.8"/>
<circle cx="585.2" cy="406" r="5.1" fill="#1b1b1b" stroke="#000" stroke-width="0.5"/>
<path d="M583.2 404.5 h0.9 M586.2 403.5 h0.9 M586.7 407 h0.9 M582.7 407.5 h0.9 M584.7 409 h0.9" stroke="#777" stroke-width="0.8"/>
<circle cx="596.3" cy="424.3" r="5.1" fill="#1b1b1b" stroke="#000" stroke-width="0.5"/>
<path d="M594.3 422.8 h0.9 M597.3 421.8 h0.9 M597.8 425.3 h0.9 M593.8 425.8 h0.9 M595.8 427.3 h0.9" stroke="#777" stroke-width="0.8"/>
<circle cx="600.4" cy="400.9" r="9" fill="#8ed05a" stroke="#4c8a2c" stroke-width="0.9"/>
<circle cx="600.4" cy="400.9" r="1.1" fill="#111"/>
<!--/DRAW-->
 <path d="M193 136 H699 M202.8 136 V432" stroke="#222" stroke-width="1.2"/>
 <path d="M204.82 133.6 V136 M208.74 131 V136 M212.66 133.6 V136 M216.59 132.6 V136 M220.51 133.6 V136 M224.43 132.6 V136 M228.36 133.6 V136 M232.28 127 V136 M236.20 133.6 V136 M240.13 132.6 V136 M244.05 133.6 V136 M247.97 132.6 V136 M251.90 133.6 V136 M255.82 131 V136 M259.74 133.6 V136 M263.67 132.6 V136 M267.59 133.6 V136 M271.51 132.6 V136 M275.44 133.6 V136 M279.36 127 V136 M283.28 133.6 V136 M287.21 132.6 V136 M291.13 133.6 V136 M295.05 132.6 V136 M298.98 133.6 V136 M302.90 131 V136 M306.82 133.6 V136 M310.75 132.6 V136 M314.67 133.6 V136 M318.59 132.6 V136 M322.52 133.6 V136 M326.44 127 V136 M330.36 133.6 V136 M334.29 132.6 V136 M338.21 133.6 V136 M342.13 132.6 V136 M346.06 133.6 V136 M349.98 131 V136 M353.90 133.6 V136 M357.83 132.6 V136 M361.75 133.6 V136 M365.67 132.6 V136 M369.60 133.6 V136 M373.52 127 V136 M377.44 133.6 V136 M381.37 132.6 V136 M385.29 133.6 V136 M389.21 132.6 V136 M393.14 133.6 V136 M397.06 131 V136 M400.98 133.6 V136 M404.91 132.6 V136 M408.83 133.6 V136 M412.75 132.6 V136 M416.68 133.6 V136 M420.60 127 V136 M424.52 133.6 V136 M428.45 132.6 V136 M432.37 133.6 V136 M436.29 132.6 V136 M440.22 133.6 V136 M444.14 131 V136 M448.06 133.6 V136 M451.99 132.6 V136 M455.91 133.6 V136 M459.83 132.6 V136 M463.76 133.6 V136 M467.68 127 V136 M471.60 133.6 V136 M475.53 132.6 V136 M479.45 133.6 V136 M483.37 132.6 V136 M487.30 133.6 V136 M491.22 131 V136 M495.14 133.6 V136 M499.07 132.6 V136 M502.99 133.6 V136 M506.91 132.6 V136 M510.84 133.6 V136 M514.76 127 V136 M518.68 133.6 V136 M522.61 132.6 V136 M526.53 133.6 V136 M530.45 132.6 V136 M534.38 133.6 V136 M538.30 131 V136 M542.22 133.6 V136 M546.15 132.6 V136 M550.07 133.6 V136 M553.99 132.6 V136 M557.92 133.6 V136 M561.84 127 V136 M565.76 133.6 V136 M569.69 132.6 V136 M573.61 133.6 V136 M577.53 132.6 V136 M581.46 133.6 V136 M585.38 131 V136 M589.30 133.6 V136 M593.23 132.6 V136 M597.15 133.6 V136 M601.07 132.6 V136 M605.00 133.6 V136 M608.92 127 V136 M612.84 133.6 V136 M616.77 132.6 V136 M620.69 133.6 V136 M624.61 132.6 V136 M628.54 133.6 V136 M632.46 131 V136 M636.38 133.6 V136 M640.31 132.6 V136 M644.23 133.6 V136 M648.15 132.6 V136 M652.08 133.6 V136 M656.00 127 V136 M659.92 133.6 V136 M663.85 132.6 V136 M667.77 133.6 V136 M671.69 132.6 V136 M675.62 133.6 V136 M679.54 131 V136 M683.46 133.6 V136 M687.39 132.6 V136 M691.31 133.6 V136 M695.23 132.6 V136 M699.16 133.6 V136 M203.2 127 V136 M200.4 138.10 H203 M199.4 142.01 H203 M200.4 145.91 H203 M199.4 149.82 H203 M200.4 153.72 H203 M198 157.63 H203 M200.4 161.53 H203 M199.4 165.44 H203 M200.4 169.34 H203 M199.4 173.25 H203 M200.4 177.16 H203 M194 181.06 H203 M200.4 184.96 H203 M199.4 188.87 H203 M200.4 192.77 H203 M199.4 196.68 H203 M200.4 200.58 H203 M198 204.49 H203 M200.4 208.39 H203 M199.4 212.30 H203 M200.4 216.20 H203 M199.4 220.11 H203 M200.4 224.01 H203 M194 227.92 H203 M200.4 231.82 H203 M199.4 235.73 H203 M200.4 239.63 H203 M199.4 243.54 H203 M200.4 247.44 H203 M198 251.35 H203 M200.4 255.25 H203 M199.4 259.16 H203 M200.4 263.06 H203 M199.4 266.97 H203 M200.4 270.88 H203 M194 274.78 H203 M200.4 278.68 H203 M199.4 282.59 H203 M200.4 286.50 H203 M199.4 290.40 H203 M200.4 294.30 H203 M198 298.21 H203 M200.4 302.12 H203 M199.4 306.02 H203 M200.4 309.92 H203 M199.4 313.83 H203 M200.4 317.74 H203 M194 321.64 H203 M200.4 325.54 H203 M199.4 329.45 H203 M200.4 333.36 H203 M199.4 337.26 H203 M200.4 341.16 H203 M198 345.07 H203 M200.4 348.98 H203 M199.4 352.88 H203 M200.4 356.78 H203 M199.4 360.69 H203 M200.4 364.59 H203 M194 368.50 H203 M200.4 372.40 H203 M199.4 376.31 H203 M200.4 380.21 H203 M199.4 384.12 H203 M200.4 388.02 H203 M198 391.93 H203 M200.4 395.83 H203 M199.4 399.74 H203 M200.4 403.64 H203 M199.4 407.55 H203 M200.4 411.45 H203 M194 415.36 H203 M200.4 419.26 H203 M199.4 423.17 H203 M200.4 427.07 H203 M199.4 430.98 H203" stroke="#222" stroke-width="1" fill="none"/>
<text x="233.48" y="133.5" font-size="7" fill="#222">8</text>
<text x="280.56" y="133.5" font-size="7" fill="#222">16</text>
<text x="327.64" y="133.5" font-size="7" fill="#222">24</text>
<text x="374.72" y="133.5" font-size="7" fill="#222">32</text>
<text x="421.80" y="133.5" font-size="7" fill="#222">40</text>
<text x="468.88" y="133.5" font-size="7" fill="#222">48</text>
<text x="515.96" y="133.5" font-size="7" fill="#222">56</text>
<text x="563.04" y="133.5" font-size="7" fill="#222">64</text>
<text x="610.12" y="133.5" font-size="7" fill="#222">72</text>
<text x="657.20" y="133.5" font-size="7" fill="#222">80</text>
<text transform="translate(199.3 180.56) rotate(-90)" font-size="7" fill="#222">8</text>
<text transform="translate(199.3 227.42) rotate(-90)" font-size="7" fill="#222">16</text>
<text transform="translate(199.3 274.28) rotate(-90)" font-size="7" fill="#222">24</text>
<text transform="translate(199.3 321.14) rotate(-90)" font-size="7" fill="#222">32</text>
<text transform="translate(199.3 368.00) rotate(-90)" font-size="7" fill="#222">40</text>
<text transform="translate(199.3 414.86) rotate(-90)" font-size="7" fill="#222">48</text>

</svg>
</body></html>
